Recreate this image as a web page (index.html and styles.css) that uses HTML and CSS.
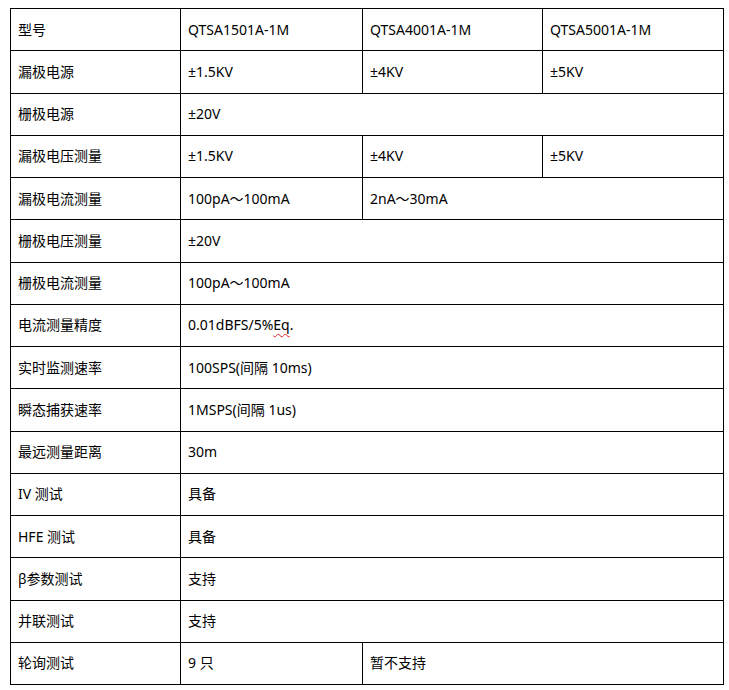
FILE: index.html
```html
<!DOCTYPE html>
<html lang="zh-CN">
<head>
<meta charset="utf-8">
<title>参数表</title>
<link rel="stylesheet" href="styles.css">
</head>
<body>
<table class="spec">
  <colgroup>
    <col class="c1"><col class="c2"><col class="c3"><col class="c4">
  </colgroup>
  <tbody>
    <tr><td>型号</td><td>QTSA1501A-1M</td><td>QTSA4001A-1M</td><td>QTSA5001A-1M</td></tr>
    <tr><td>漏极电源</td><td>±1.5KV</td><td>±4KV</td><td>±5KV</td></tr>
    <tr><td>栅极电源</td><td colspan="3">±20V</td></tr>
    <tr><td>漏极电压测量</td><td>±1.5KV</td><td>±4KV</td><td>±5KV</td></tr>
    <tr><td>漏极电流测量</td><td>100pA～100mA</td><td colspan="2">2nA～30mA</td></tr>
    <tr><td>栅极电压测量</td><td colspan="3">±20V</td></tr>
    <tr><td>栅极电流测量</td><td colspan="3">100pA～100mA</td></tr>
    <tr><td>电流测量精度</td><td colspan="3">0.01dBFS/5%<span class="spell">Eq</span>.</td></tr>
    <tr><td>实时监测速率</td><td colspan="3">100SPS(间隔 10ms)</td></tr>
    <tr><td>瞬态捕获速率</td><td colspan="3">1MSPS(间隔 1us)</td></tr>
    <tr><td>最远测量距离</td><td colspan="3">30m</td></tr>
    <tr><td>IV 测试</td><td colspan="3">具备</td></tr>
    <tr><td>HFE 测试</td><td colspan="3">具备</td></tr>
    <tr><td>β参数测试</td><td colspan="3">支持</td></tr>
    <tr><td>并联测试</td><td colspan="3">支持</td></tr>
    <tr><td>轮询测试</td><td>9 只</td><td colspan="2">暂不支持</td></tr>
  </tbody>
</table>
</body>
</html>
```

FILE: styles.css
```css
html, body {
  background: #ffffff;
}
body {
  margin: 8px 0 0 10px;
  font-family: "Noto Sans", "Noto Sans CJK SC", sans-serif;
  font-size: 14px;
  color: #000000;
}
.spec {
  border-collapse: collapse;
  table-layout: fixed;
  width: 714px;
}
.c1 { width: 170px; }
.c2 { width: 182px; }
.c3 { width: 180px; }
.c4 { width: 181px; }
.spec tr {
  height: 42.25px;
}
.spec td {
  border: 1px solid #000000;
  padding: 0 7px;
  vertical-align: middle;
  line-height: 20px;
  white-space: nowrap;
}
.spell {
  text-decoration: underline wavy #e02020;
  text-decoration-thickness: 1px;
  text-underline-offset: 3px;
}
```
